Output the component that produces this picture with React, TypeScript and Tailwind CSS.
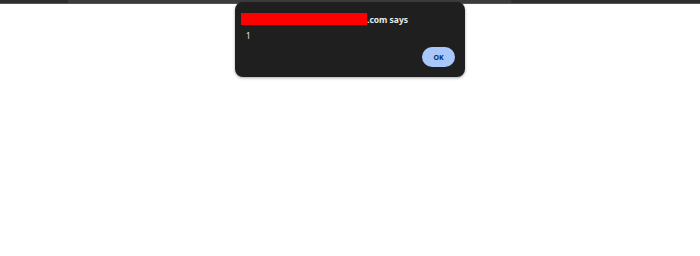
export default function App() {
  return (
    <div className="w-[700px] h-[256px] bg-white relative overflow-hidden" style={{ fontFamily: "'Noto Sans', 'Open Sans', sans-serif" }}>
      {/* browser top strip */}
      <div className="h-[4px] w-full bg-[#2e2e2e] border-b border-[#555] flex">
        <div className="ml-[68px] w-[443px] h-[3px] bg-[#3c3c3c]" />
      </div>

      {/* alert dialog */}
      <div className="absolute left-[235px] top-[2px] w-[230px] h-[75px] bg-[#1f1f1f] rounded-[8px] shadow-[0_1px_3px_rgba(0,0,0,0.35)] pl-[6px] pr-[10px] pt-[11px]">
        <div className="flex items-end h-[12px]">
          <div className="w-[126px] h-[12px] bg-[#ff0000]" />
          <span className="text-[8.5px] leading-none font-bold text-[#e8eaed] pb-[1px]">.com says</span>
        </div>
        <div className="mt-[7px] ml-[5px] text-[8px] leading-none text-[#e8eaed]">1</div>
        <div className="flex justify-end mt-[7px]">
          <button className="w-[33px] h-[20px] rounded-full bg-[#a8c7fa] text-[#062e6f] text-[7px] font-bold leading-none">
            OK
          </button>
        </div>
      </div>
    </div>
  );
}
